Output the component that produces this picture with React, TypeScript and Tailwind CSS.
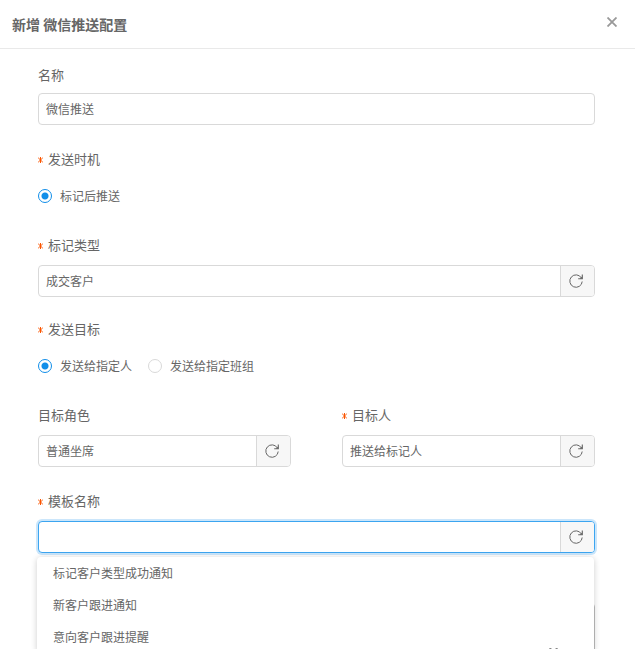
import { useId, type ReactNode } from 'react'

const templates = ['标记客户类型成功通知', '新客户跟进通知', '意向客户跟进提醒']

function RequiredMark() {
  return (
    <svg className="mr-1 mt-0.5 shrink-0" width="6" height="6" viewBox="0 0 6 6" aria-hidden="true">
      <path d="M2.5 0v6M0.2 0.8l4.6 4.4M4.8 0.8l-4.6 4.4" stroke="#fa5500" fill="none" />
    </svg>
  )
}

function ReloadIcon() {
  return (
    <svg width="14" height="14" viewBox="0 0 14 14" fill="none" stroke="#666" aria-hidden="true">
      <path d="M12.4 4A6.2 6.2 0 1 0 13.2 7.5" />
      <path d="M13.3 0.4v4.3H9.2" strokeWidth="1.1" />
      <path d="M13.3 2.2v2.5h-2.5z" fill="#666" stroke="none" />
    </svg>
  )
}

function Label({ htmlFor, required, children }: { htmlFor?: string; required?: boolean; children: ReactNode }) {
  return (
    <label htmlFor={htmlFor} className="flex h-5 items-center text-[13px] leading-5">
      {required && <RequiredMark />}
      {children}
    </label>
  )
}

type FieldProps = {
  label: string
  value: string
  required?: boolean
  reload?: boolean
  focused?: boolean
}

function Field({ label, value, required, reload, focused }: FieldProps) {
  const id = useId()
  return (
    <div>
      <Label htmlFor={id} required={required}>
        {label}
      </Label>
      <div
        className={`flex h-8 overflow-hidden rounded border bg-white ${reload ? 'mt-2.5' : 'mt-2'} ${
          focused ? 'border-[#3ca5f0] shadow-[0_0_0_2px_#cbe6fb]' : 'border-[#d9d9d9]'
        }`}
      >
        <input
          id={id}
          type="text"
          defaultValue={value}
          className="min-w-0 flex-1 bg-transparent px-[7px] text-xs outline-none"
        />
        {reload && (
          <button
            type="button"
            aria-label="刷新"
            className="flex w-[34px] shrink-0 items-center border-l border-[#d9d9d9] bg-[#f7f7f7] pl-2"
          >
            <ReloadIcon />
          </button>
        )}
      </div>
    </div>
  )
}

function Radio({ name, label, checked }: { name: string; label: string; checked?: boolean }) {
  return (
    <label className="flex items-center gap-2 text-xs leading-5">
      <input
        type="radio"
        name={name}
        defaultChecked={checked}
        className="size-3.5 appearance-none rounded-full border border-[#d9d9d9] bg-white checked:border-[#108ee9] checked:bg-[radial-gradient(circle,#108ee9_3px,#fff_4px)]"
      />
      {label}
    </label>
  )
}

function RadioGroup({ label, children }: { label: string; children: ReactNode }) {
  return (
    <div role="radiogroup" aria-label={label} className="pb-[7px]">
      <Label required>{label}</Label>
      <div className="mt-[17px] flex gap-4">{children}</div>
    </div>
  )
}

export default function App() {
  return (
    <div className="h-screen overflow-hidden bg-white font-['Noto_Sans_CJK_SC',sans-serif] text-[#666]">
      <header className="flex h-[49px] items-center justify-between border-b border-[#e9e9e9] pl-3 pr-[11px]">
        <h1 className="text-sm font-bold">新增 微信推送配置</h1>
        <button type="button" aria-label="关闭" className="flex size-6 items-center justify-center pb-1">
          <svg width="10" height="10" viewBox="0 0 10 10" stroke="#999" strokeWidth="1.8" aria-hidden="true">
            <path d="M0.5 0.5l9 9M9.5 0.5l-9 9" />
          </svg>
        </button>
      </header>

      <form className="pl-[38px] pr-10 pt-4">
        <Field label="名称" value="微信推送" />

        <div className="mt-6 flex flex-col gap-[22px]">
          <RadioGroup label="发送时机">
            <Radio name="timing" label="标记后推送" checked />
          </RadioGroup>

          <Field label="标记类型" value="成交客户" required reload />

          <RadioGroup label="发送目标">
            <Radio name="target" label="发送给指定人" checked />
            <Radio name="target" label="发送给指定班组" />
          </RadioGroup>

          <div className="grid grid-cols-2 gap-[51px] pb-0.5">
            <Field label="目标角色" value="普通坐席" reload />
            <Field label="目标人" value="推送给标记人" required reload />
          </div>

          <div className="relative">
            <Field label="模板名称" value="" required reload focused />
            <div className="absolute -left-px right-px top-full z-10 mt-1 rounded bg-white text-xs shadow-[0_1px_6px_rgba(0,0,0,0.2)]">
              <ul>
                {templates.map((name) => (
                  <li key={name}>
                    <button type="button" className="h-8 w-full px-4 text-left">
                      {name}
                    </button>
                  </li>
                ))}
              </ul>
              <svg className="absolute bottom-0 right-9" width="9" height="5" viewBox="0 0 9 5" aria-hidden="true">
                <path d="M0 0h2l2.5 3L7 0h2L5.5 5h-2z" fill="#888" />
              </svg>
            </div>
          </div>

          {/* template preview, under the open list */}
          <div className="mt-7 h-24 rounded border border-[#bfbfbf]" />
        </div>
      </form>
    </div>
  )
}
